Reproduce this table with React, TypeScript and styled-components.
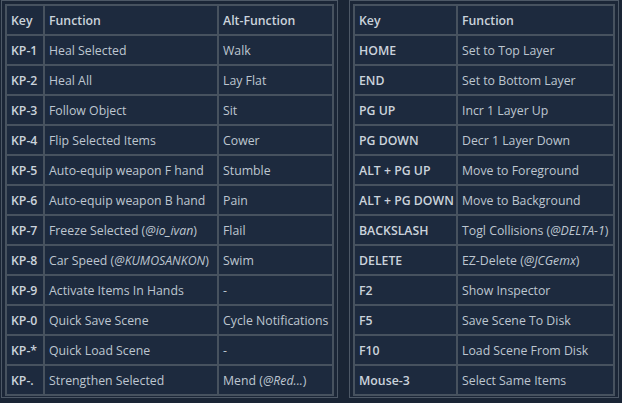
import React from "react";
import styled, { createGlobalStyle } from "styled-components";

const Global = createGlobalStyle`
  html, body { margin: 0; padding: 0; background: #1a2535; }
  body { font-family: "Open Sans", "Liberation Sans", Arial, sans-serif; }
`;

const Page = styled.div`
  display: flex;
  gap: 11px;
  padding: 0 0 0 1px;
  width: 622px;
  height: 403px;
  box-sizing: border-box;
`;

const Panel = styled.div<{ $w: number }>`
  width: ${(p) => p.$w}px;
  height: 398px;
  box-sizing: border-box;
  border: 1px solid #4d5866;
  padding: 3px;
  background: #1b2637;
`;

const Table = styled.table`
  width: 100%;
  border-collapse: collapse;
  table-layout: fixed;
  font-size: 12.3px;
`;

const Row = styled.tr`
  height: 30px;
`;

const Cell = styled.td<{ $head?: boolean; $key?: boolean }>`
  border: 2px solid #47525f;
  padding: 0 4px;
  background: #1d2a3e;
  white-space: nowrap;
  overflow: hidden;
  font-weight: ${(p) => (p.$head || p.$key ? 600 : 400)};
  color: ${(p) => (p.$head || p.$key ? "#cbd3dc" : "#bdc6d0")};
`;

const Handle = styled.em`
  font-style: italic;
`;

const h = (pre: string, handle: string, post = ")") => (
  <>
    {pre}(<Handle>{handle}</Handle>
    {post}
  </>
);

const left: [string, React.ReactNode, React.ReactNode][] = [
  ["KP-1", "Heal Selected", "Walk"],
  ["KP-2", "Heal All", "Lay Flat"],
  ["KP-3", "Follow Object", "Sit"],
  ["KP-4", "Flip Selected Items", "Cower"],
  ["KP-5", "Auto-equip weapon F hand", "Stumble"],
  ["KP-6", "Auto-equip weapon B hand", "Pain"],
  ["KP-7", h("Freeze Selected ", "@io_ivan"), "Flail"],
  ["KP-8", h("Car Speed ", "@KUMOSANKON"), "Swim"],
  ["KP-9", "Activate Items In Hands", "-"],
  ["KP-0", "Quick Save Scene", "Cycle Notifications"],
  ["KP-*", "Quick Load Scene", "-"],
  ["KP-.", "Strengthen Selected", h("Mend ", "@Red...")],
];

const right: [string, React.ReactNode][] = [
  ["HOME", "Set to Top Layer"],
  ["END", "Set to Bottom Layer"],
  ["PG UP", "Incr 1 Layer Up"],
  ["PG DOWN", "Decr 1 Layer Down"],
  ["ALT + PG UP", "Move to Foreground"],
  ["ALT + PG DOWN", "Move to Background"],
  ["BACKSLASH", h("Togl Collisions ", "@DELTA-1")],
  ["DELETE", h("EZ-Delete ", "@JCGemx")],
  ["F2", "Show Inspector"],
  ["F5", "Save Scene To Disk"],
  ["F10", "Load Scene From Disk"],
  ["Mouse-3", "Select Same Items"],
];

export default function App() {
  return (
    <>
      <Global />
      <Page>
        <Panel $w={337}>
          <Table>
            <colgroup>
              <col style={{ width: 38 }} />
              <col style={{ width: 174 }} />
              <col />
            </colgroup>
            <tbody>
              <Row>
                <Cell $head>Key</Cell>
                <Cell $head>Function</Cell>
                <Cell $head>Alt-Function</Cell>
              </Row>
              {left.map(([k, f, a]) => (
                <Row key={k}>
                  <Cell $key>{k}</Cell>
                  <Cell>{f}</Cell>
                  <Cell>{a}</Cell>
                </Row>
              ))}
            </tbody>
          </Table>
        </Panel>
        <Panel $w={270}>
          <Table>
            <colgroup>
              <col style={{ width: 103 }} />
              <col />
            </colgroup>
            <tbody>
              <Row>
                <Cell $head>Key</Cell>
                <Cell $head>Function</Cell>
              </Row>
              {right.map(([k, f]) => (
                <Row key={k}>
                  <Cell $key>{k}</Cell>
                  <Cell>{f}</Cell>
                </Row>
              ))}
            </tbody>
          </Table>
        </Panel>
      </Page>
    </>
  );
}
